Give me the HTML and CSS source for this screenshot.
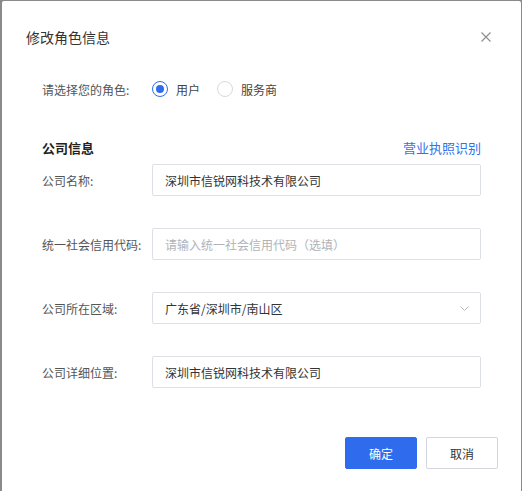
FILE: index.html
```html
<!DOCTYPE html>
<html lang="zh">
<head>
<meta charset="utf-8">
<link rel="stylesheet" href="styles.css">
</head>
<body>
<div class="dialog">
  <div class="header">
    <span class="title">修改角色信息</span>
    <svg class="close" width="10" height="10" viewBox="0 0 10 10"><path d="M0.5 0.5L9.5 9.5M9.5 0.5L0.5 9.5" stroke="#8c8c8c" stroke-width="1.1" fill="none"/></svg>
  </div>
  <div class="body">
    <div class="role-row">
      <span class="role-label">请选择您的角色:</span>
      <label class="radio checked"><span class="dot"></span><span>用户</span></label>
      <label class="radio"><span class="dot"></span><span>服务商</span></label>
    </div>
    <div class="section-head">
      <span class="section-title">公司信息</span>
      <a class="link">营业执照识别</a>
    </div>
    <div class="form">
      <div class="row">
        <span class="label">公司名称:</span>
        <div class="input">深圳市信锐网科技术有限公司</div>
      </div>
      <div class="row">
        <span class="label">统一社会信用代码:</span>
        <div class="input placeholder">请输入统一社会信用代码（选填）</div>
      </div>
      <div class="row">
        <span class="label">公司所在区域:</span>
        <div class="input select"><span>广东省/深圳市/南山区</span>
          <svg width="9" height="5" viewBox="0 0 9 5"><path d="M0.5 0.5L4.5 4.5L8.5 0.5" stroke="#b4b8c0" stroke-width="1" fill="none"/></svg>
        </div>
      </div>
      <div class="row">
        <span class="label">公司详细位置:</span>
        <div class="input">深圳市信锐网科技术有限公司</div>
      </div>
    </div>
  </div>
  <div class="footer">
    <button class="btn primary">确定</button>
    <button class="btn">取消</button>
  </div>
</div>
</body>
</html>
```
FILE: styles.css
```css
html, body {
  margin: 0;
  padding: 0;
  height: 100%;
}
body {
  background: #8a8a8a;
  font-family: "Noto Sans CJK SC", "Noto Sans", sans-serif;
  padding: 1px 1px 0 2px;
  box-sizing: border-box;
}
.dialog {
  background: #fff;
  height: 100%;
  border-radius: 2px 2px 0 0;
  display: flex;
  flex-direction: column;
}
.header {
  display: flex;
  align-items: center;
  justify-content: space-between;
  padding: 26px 30px 0 24px;
  height: 20px;
}
.title {
  font-size: 14px;
  line-height: 20px;
  color: #333;
}
.close {
  display: block;
}
.body {
  padding: 0 40px;
}
.role-row {
  display: flex;
  align-items: center;
  margin-top: 32px;
  height: 20px;
  font-size: 12px;
  color: #555;
}
.role-label {
  width: 110px;
}
.radio {
  display: flex;
  align-items: center;
  gap: 8px;
  margin-right: 17px;
  color: #444;
}
.radio .dot {
  width: 16px;
  height: 16px;
  box-sizing: border-box;
  border: 1px solid #d6d9df;
  border-radius: 50%;
  position: relative;
}
.radio.checked .dot {
  border: 1.5px solid #2f6ced;
}
.radio.checked .dot::after {
  content: "";
  position: absolute;
  left: 50%;
  top: 50%;
  width: 8px;
  height: 8px;
  margin: -4px 0 0 -4px;
  border-radius: 50%;
  background: #2f6ced;
}
.section-head {
  display: flex;
  justify-content: space-between;
  align-items: center;
  margin-top: 38px;
  height: 20px;
}
.section-title {
  font-size: 13px;
  font-weight: bold;
  color: #222;
}
.link {
  font-size: 13px;
  color: #2f72ee;
}
.form {
  margin-top: 7px;
  display: flex;
  flex-direction: column;
  gap: 32px;
}
.row {
  display: flex;
  align-items: center;
  height: 32px;
}
.label {
  width: 110px;
  flex: none;
  font-size: 12px;
  color: #555;
}
.input {
  flex: 1;
  height: 32px;
  box-sizing: border-box;
  border: 1px solid #dcdfe6;
  border-radius: 2px;
  padding: 0 12px;
  font-size: 12px;
  color: #333;
  display: flex;
  align-items: center;
}
.input.placeholder {
  color: #b0b3b9;
}
.input.select {
  justify-content: space-between;
  padding-right: 11px;
}
.footer {
  margin-top: auto;
  margin-bottom: 22px;
  display: flex;
  justify-content: flex-end;
  gap: 9px;
  padding-right: 23px;
}
.btn {
  width: 72px;
  height: 32px;
  box-sizing: border-box;
  border: 1px solid #d3d6dd;
  border-radius: 2px;
  background: #fff;
  color: #333;
  font-family: inherit;
  font-size: 12px;
  padding: 0;
}
.btn.primary {
  background: #2f6ced;
  border-color: #2f6ced;
  color: #fff;
}
```
